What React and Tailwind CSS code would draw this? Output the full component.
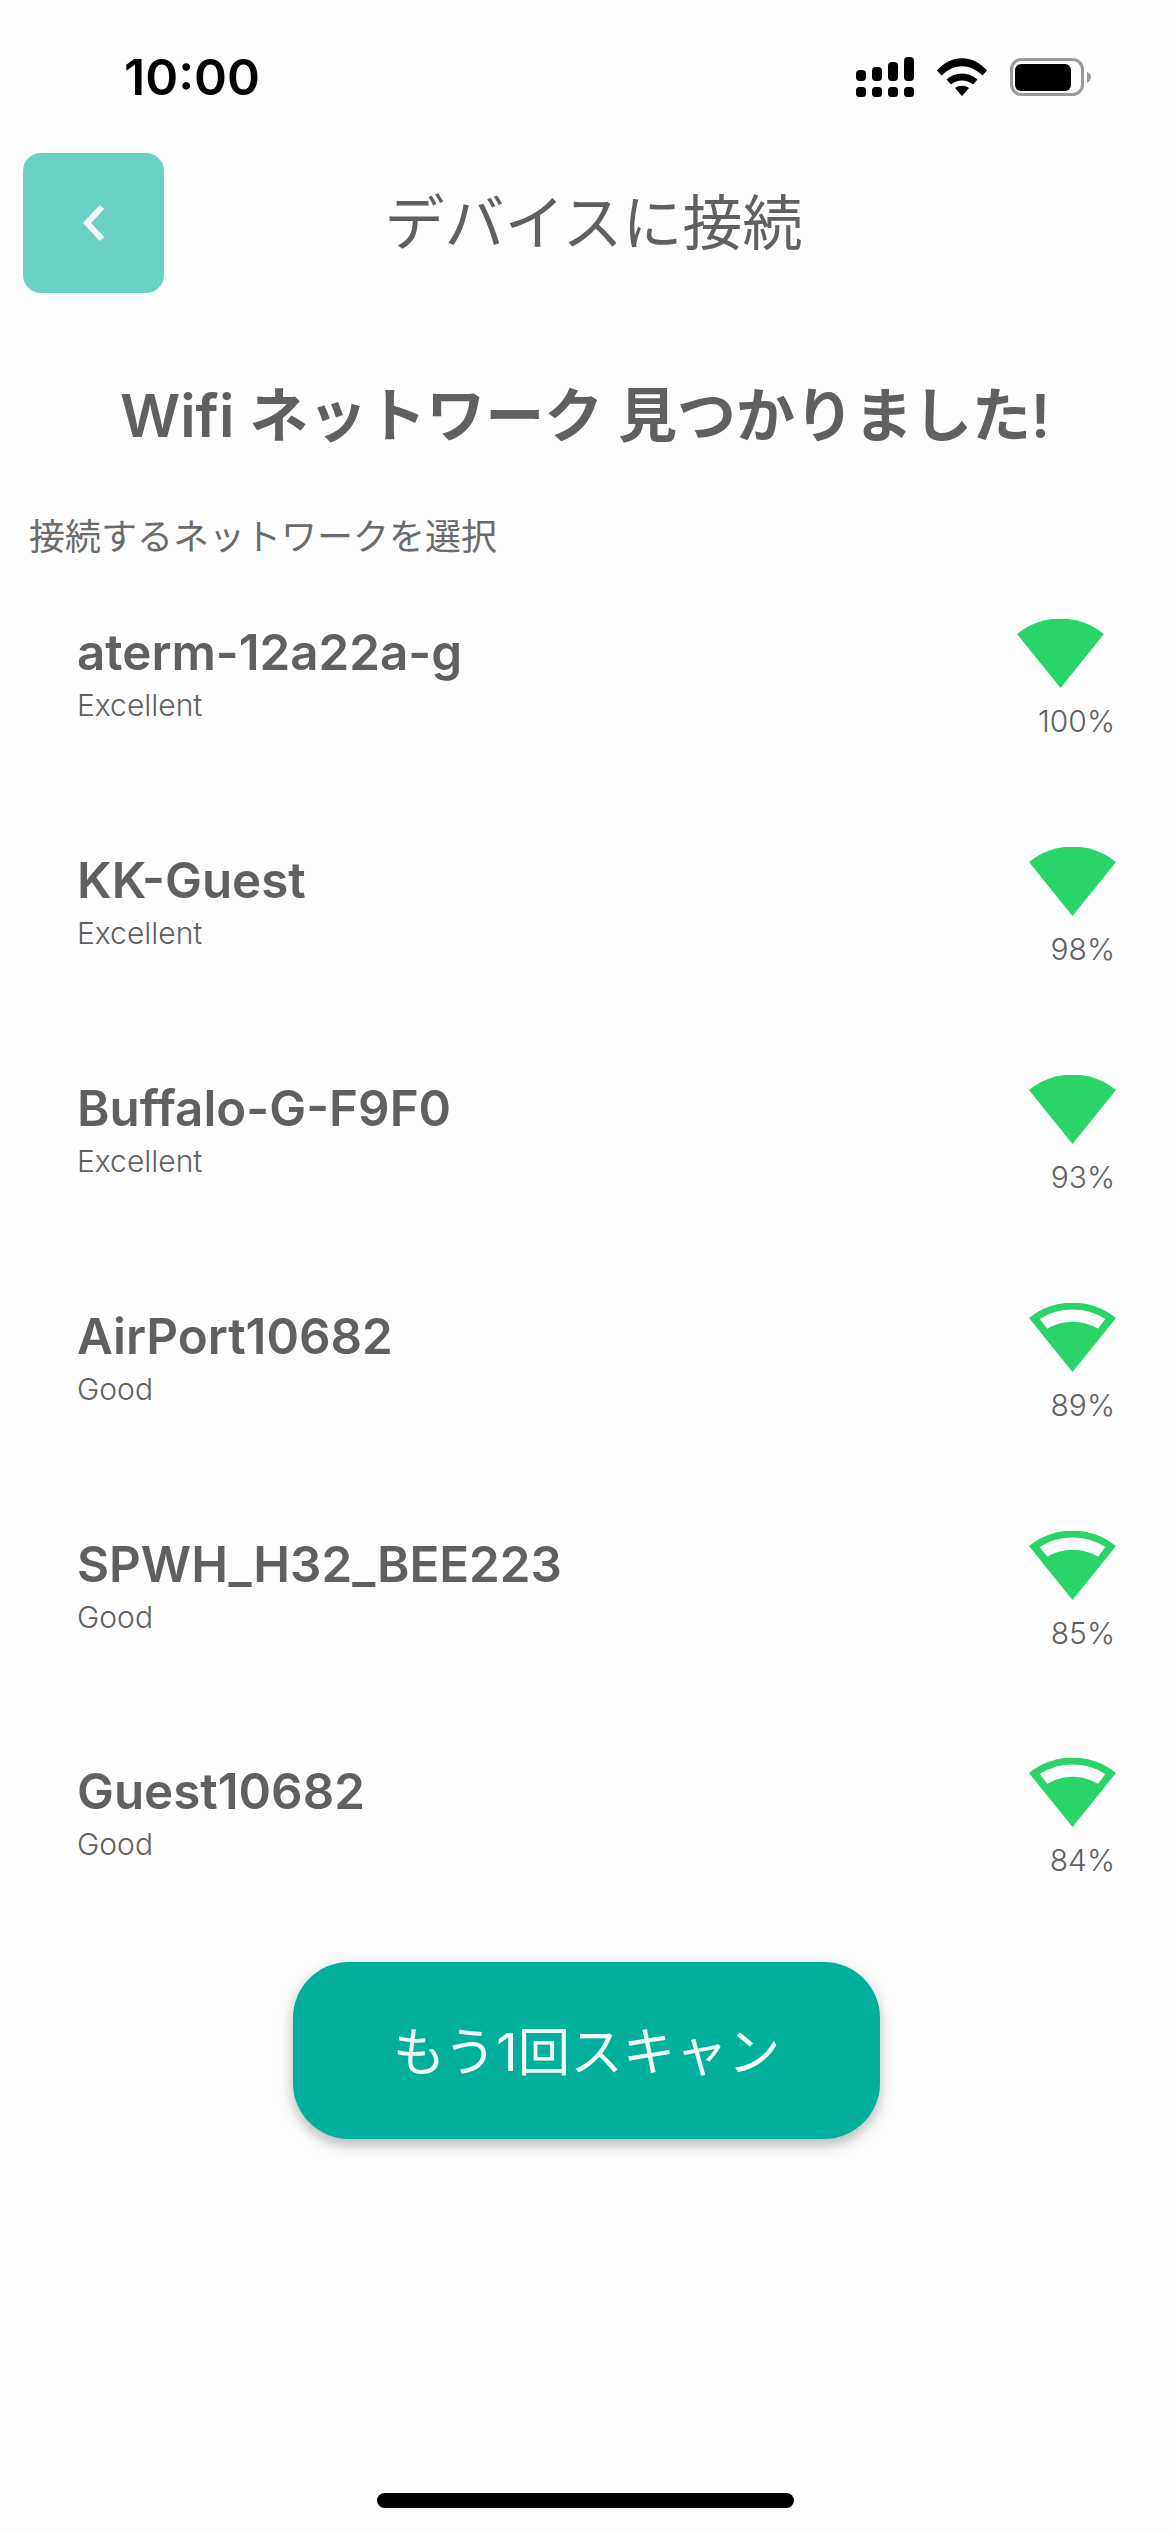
import React from "react";

const networks = [
  { name: "aterm-12a22a-g", status: "Excellent", percent: 100, strong: true },
  { name: "KK-Guest", status: "Excellent", percent: 98, strong: true },
  { name: "Buffalo-G-F9F0", status: "Excellent", percent: 93, strong: true },
  { name: "AirPort10682", status: "Good", percent: 89, strong: false },
  { name: "SPWH_H32_BEE223", status: "Good", percent: 85, strong: false },
  { name: "Guest10682", status: "Good", percent: 84, strong: false },
];

const SignalIcon = () => (
  <svg width="58" height="40" viewBox="0 0 58 40" fill="#000">
    <rect x="0" y="13" width="10" height="11" rx="4" />
    <rect x="16" y="10" width="10" height="14" rx="4" />
    <rect x="32" y="5" width="10" height="19" rx="4" />
    <rect x="48" y="0" width="10" height="24" rx="4" />
    <rect x="0" y="30" width="10" height="10" rx="3.5" />
    <rect x="16" y="30" width="10" height="10" rx="3.5" />
    <rect x="32" y="30" width="10" height="10" rx="3.5" />
    <rect x="48" y="30" width="10" height="10" rx="3.5" />
  </svg>
);

const StatusWifiIcon = () => (
  <svg width="50" height="38" viewBox="0 0 50 38" fill="#000">
    <path d="M0 12.5 C14 -4 36 -4 50 12.5 L45.5 17.5 C33 5 17 5 4.5 17.5 Z" />
    <path d="M9.5 21.5 C18 13.5 32 13.5 40.5 21.5 L36 26.5 C29.5 21 20.5 21 14 26.5 Z" />
    <path d="M18 30 C22 27 28 27 32 30 L25 38 Z" />
  </svg>
);

const BatteryIcon = () => (
  <svg width="81" height="38" viewBox="0 0 81 38">
    <rect x="1.5" y="1.5" width="71" height="35" rx="10" fill="none" stroke="#999" strokeWidth="3" />
    <rect x="5" y="6" width="56" height="27" rx="6" fill="#000" />
    <path d="M77 14 C80 15 81 17 81 19 C81 21 80 23 77 25 Z" fill="#999" />
  </svg>
);

const FanIcon = ({ strong }) => (
  <svg width="87" height="69" viewBox="0 0 87 69" fill="#29D568">
    {strong ? (
      <path d="M0 15 A69 69 0 0 1 87 15 L43.5 69 Z" />
    ) : (
      <path
        fillRule="evenodd"
        d="M0 15 A69 69 0 0 1 87 15 L43.5 69 Z M10.7 16 A62 62 0 0 1 76.3 16 L69 25.7 A50 50 0 0 0 18.3 25.7 Z"
      />
    )}
  </svg>
);

const NetworkRow = ({ name, status, percent, strong }) => (
  <div className="flex h-[227.9px] items-start justify-between pl-[77px] pr-[55px]">
    <div className="flex flex-col pt-[2px]">
      <span className="text-[49.3px] leading-[62px] font-semibold text-[#606060]">{name}</span>
      <span className="mt-[4px] text-[30px] leading-[36px] font-light text-[#606060]">{status}</span>
    </div>
    <div className="flex flex-col items-end">
      <div className={percent === 100 ? "mr-[11px]" : "-mr-[1px]"}>
        <FanIcon strong={strong} />
      </div>
      <span className="mt-[15px] text-[30px] leading-[36px] font-light text-[#606060]">{percent}%</span>
    </div>
  </div>
);

export default function App() {
  return (
    <div
      className="flex h-[2532px] w-[1170px] flex-col overflow-hidden bg-[#fdfdfd]"
      style={{ fontFamily: '"Inter", "Noto Sans CJK JP", sans-serif' }}
    >
      {/* Status bar */}
      <div className="flex h-[153px] items-start justify-between pl-[124px] pr-[79px] pt-[57px]">
        <span className="text-[50px] leading-[40px] font-semibold text-black">10:00</span>
        <div className="flex items-center gap-[23px]">
          <SignalIcon />
          <StatusWifiIcon />
          <BatteryIcon />
        </div>
      </div>

      {/* Header */}
      <div className="flex h-[140px] items-center pl-[23px] pr-[147px]">
        <button className="flex h-[140px] w-[141px] items-center justify-center rounded-[18px] bg-[#6AD0C4]">
          <svg width="26" height="38" viewBox="0 0 26 38" fill="none" stroke="#F3F9F9" strokeWidth="6">
            <polyline points="21,3 6,19 21,35" />
          </svg>
        </button>
        <h1 className="flex-1 text-center text-[60px] font-normal text-[#606060]">デバイスに接続</h1>
      </div>

      <h2 className="mt-[85px] text-center text-[59px] leading-[76px] font-semibold text-[#606060]">
        Wifi ネットワーク 見つかりました!
      </h2>

      <p className="mt-[58px] pl-[29px] text-[36px] leading-[50px] font-normal text-[#6b6b6b]">
        接続するネットワークを選択
      </p>

      {/* Network list */}
      <div className="mt-[57px] flex flex-col">
        {networks.map((n) => (
          <NetworkRow key={n.name} {...n} />
        ))}
      </div>

      {/* Rescan button */}
      <div className="mt-[-24px] flex justify-center">
        <button className="ml-[3px] h-[177px] w-[587px] rounded-[56px] bg-[#00AF9C] pt-[3px] text-[52.5px] text-[#F3F9F9] shadow-[0_6px_14px_rgba(0,0,0,0.28)]">
          もう1回スキャン
        </button>
      </div>

      {/* Home indicator */}
      <div className="mt-auto mb-[24px] flex justify-center">
        <div className="h-[15px] w-[417px] rounded-full bg-black" />
      </div>
    </div>
  );
}
